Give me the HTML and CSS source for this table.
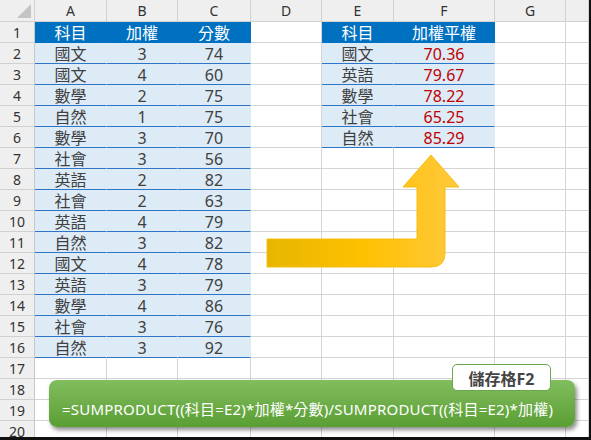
FILE: index.html
```html
<!DOCTYPE html>
<html lang="zh-Hant">
<head>
<meta charset="utf-8">
<link rel="stylesheet" href="styles.css">
</head>
<body>
<div class="frame">
  <div class="sheet">
    <div class="c h corner"><span class="tri"></span></div><div class="c h">A</div><div class="c h">B</div><div class="c h">C</div><div class="c h">D</div><div class="c h">E</div><div class="c h">F</div><div class="c h">G</div><div class="c h"></div>

    <div class="c h rn">1</div><div class="c t">科目</div><div class="c t">加權</div><div class="c t">分數</div><div class="c"></div><div class="c t">科目</div><div class="c t">加權平權</div><div class="c"></div><div class="c"></div>
    <div class="c h rn">2</div><div class="c d">國文</div><div class="c d">3</div><div class="c d">74</div><div class="c"></div><div class="c d">國文</div><div class="c d r">70.36</div><div class="c"></div><div class="c"></div>
    <div class="c h rn">3</div><div class="c d">國文</div><div class="c d">4</div><div class="c d">60</div><div class="c"></div><div class="c d">英語</div><div class="c d r">79.67</div><div class="c"></div><div class="c"></div>
    <div class="c h rn">4</div><div class="c d">數學</div><div class="c d">2</div><div class="c d">75</div><div class="c"></div><div class="c d">數學</div><div class="c d r">78.22</div><div class="c"></div><div class="c"></div>
    <div class="c h rn">5</div><div class="c d">自然</div><div class="c d">1</div><div class="c d">75</div><div class="c"></div><div class="c d">社會</div><div class="c d r">65.25</div><div class="c"></div><div class="c"></div>
    <div class="c h rn">6</div><div class="c d">數學</div><div class="c d">3</div><div class="c d">70</div><div class="c"></div><div class="c d">自然</div><div class="c d r">85.29</div><div class="c"></div><div class="c"></div>
    <div class="c h rn">7</div><div class="c d">社會</div><div class="c d">3</div><div class="c d">56</div><div class="c"></div><div class="c"></div><div class="c"></div><div class="c"></div><div class="c"></div>
    <div class="c h rn">8</div><div class="c d">英語</div><div class="c d">2</div><div class="c d">82</div><div class="c"></div><div class="c"></div><div class="c"></div><div class="c"></div><div class="c"></div>
    <div class="c h rn">9</div><div class="c d">社會</div><div class="c d">2</div><div class="c d">63</div><div class="c"></div><div class="c"></div><div class="c"></div><div class="c"></div><div class="c"></div>
    <div class="c h rn">10</div><div class="c d">英語</div><div class="c d">4</div><div class="c d">79</div><div class="c"></div><div class="c"></div><div class="c"></div><div class="c"></div><div class="c"></div>
    <div class="c h rn">11</div><div class="c d">自然</div><div class="c d">3</div><div class="c d">82</div><div class="c"></div><div class="c"></div><div class="c"></div><div class="c"></div><div class="c"></div>
    <div class="c h rn">12</div><div class="c d">國文</div><div class="c d">4</div><div class="c d">78</div><div class="c"></div><div class="c"></div><div class="c"></div><div class="c"></div><div class="c"></div>
    <div class="c h rn">13</div><div class="c d">英語</div><div class="c d">3</div><div class="c d">79</div><div class="c"></div><div class="c"></div><div class="c"></div><div class="c"></div><div class="c"></div>
    <div class="c h rn">14</div><div class="c d">數學</div><div class="c d">4</div><div class="c d">86</div><div class="c"></div><div class="c"></div><div class="c"></div><div class="c"></div><div class="c"></div>
    <div class="c h rn">15</div><div class="c d">社會</div><div class="c d">3</div><div class="c d">76</div><div class="c"></div><div class="c"></div><div class="c"></div><div class="c"></div><div class="c"></div>
    <div class="c h rn">16</div><div class="c d">自然</div><div class="c d">3</div><div class="c d">92</div><div class="c"></div><div class="c"></div><div class="c"></div><div class="c"></div><div class="c"></div>
    <div class="c h rn">17</div><div class="c"></div><div class="c"></div><div class="c"></div><div class="c"></div><div class="c"></div><div class="c"></div><div class="c"></div><div class="c"></div>
    <div class="c h rn">18</div><div class="c"></div><div class="c"></div><div class="c"></div><div class="c"></div><div class="c"></div><div class="c"></div><div class="c"></div><div class="c"></div>
    <div class="c h rn">19</div><div class="c"></div><div class="c"></div><div class="c"></div><div class="c"></div><div class="c"></div><div class="c"></div><div class="c"></div><div class="c"></div>
    <div class="c h rn">20</div><div class="c"></div><div class="c"></div><div class="c"></div><div class="c"></div><div class="c"></div><div class="c"></div><div class="c"></div><div class="c"></div>
  </div>

  <svg class="arrow" width="591" height="440" viewBox="0 0 591 440">
    <defs>
      <linearGradient id="ag" x1="267" y1="0" x2="459" y2="0" gradientUnits="userSpaceOnUse">
        <stop offset="0" stop-color="#e6b700"/>
        <stop offset="0.5" stop-color="#ffc000"/>
        <stop offset="1" stop-color="#ffc93d"/>
      </linearGradient>
    </defs>
    <path d="M267,239 L417,239 L417,187 L403,187 L431,155 L459,187 L445,187 L445,253 Q445,267 431,267 L267,267 Z" fill="url(#ag)" stroke="#f5bd10" stroke-width="1"/>
  </svg>

  <div class="formula">=SUMPRODUCT((科目=E2)*加權*分數)/SUMPRODUCT((科目=E2)*加權)</div>
  <div class="label">儲存格F2</div>
</div>
</body>
</html>
```

FILE: styles.css
```css
* { box-sizing: border-box; }
html, body { margin: 0; padding: 0; background: #fff; }
body { font-family: "Noto Sans", "Noto Sans CJK TC", sans-serif; }

.frame {
  position: relative;
  width: 591px;
  height: 440px;
  border-right: 2px solid #111;
  border-bottom: 3px solid #111;
  overflow: hidden;
}

.sheet {
  display: grid;
  grid-template-columns: 35px 72px 71px 73px 71px 72px 101px 71px 23px;
  grid-template-rows: 22px repeat(20, 21px);
}

.c {
  border-right: 1px solid #d4d4d4;
  border-bottom: 1px solid #d4d4d4;
  display: flex;
  align-items: center;
  justify-content: center;
  font-size: 16px;
  line-height: 20px;
  color: #404040;
  padding-top: 2px;
  white-space: nowrap;
  overflow: hidden;
}

.h {
  background: #efefef;
  font-size: 14px;
  color: #333;
  padding-top: 0;
  border-color: #d0d0d0;
}
.rn { padding-top: 2px; border-right-color: #c8c8c8; }

.corner { position: relative; }
.tri {
  position: absolute;
  right: 3px;
  bottom: 3px;
  width: 0;
  height: 0;
  border-left: 14px solid transparent;
  border-bottom: 14px solid #c4c4c4;
}

.t {
  background: #0070c0;
  color: #fff;
  border-right-color: #0070c0;
  border-bottom-color: #0070c0;
}

.d {
  background: #ddebf7;
  border-right-color: #ddebf7;
  border-bottom-color: #2e75c6;
}

.r { color: #c00000; }

.arrow {
  position: absolute;
  left: 0;
  top: 0;
  pointer-events: none;
}

.formula {
  position: absolute;
  left: 49px;
  top: 380px;
  width: 526px;
  height: 47px;
  border-radius: 8px;
  background: linear-gradient(#82bd5e, #5a9e34);
  box-shadow: 2px 3px 4px rgba(0, 0, 0, 0.45);
  color: #fff;
  font-size: 15px;
  letter-spacing: 0.2px;
  line-height: 20px;
  padding: 19px 0 0 13px;
  white-space: nowrap;
}

.label {
  position: absolute;
  left: 452px;
  top: 364px;
  width: 99px;
  height: 27px;
  background: #fff;
  border: 1px solid #6aa84f;
  border-radius: 5px;
  color: #454545;
  font-size: 16px;
  font-weight: 700;
  display: flex;
  align-items: center;
  justify-content: center;
}
```
